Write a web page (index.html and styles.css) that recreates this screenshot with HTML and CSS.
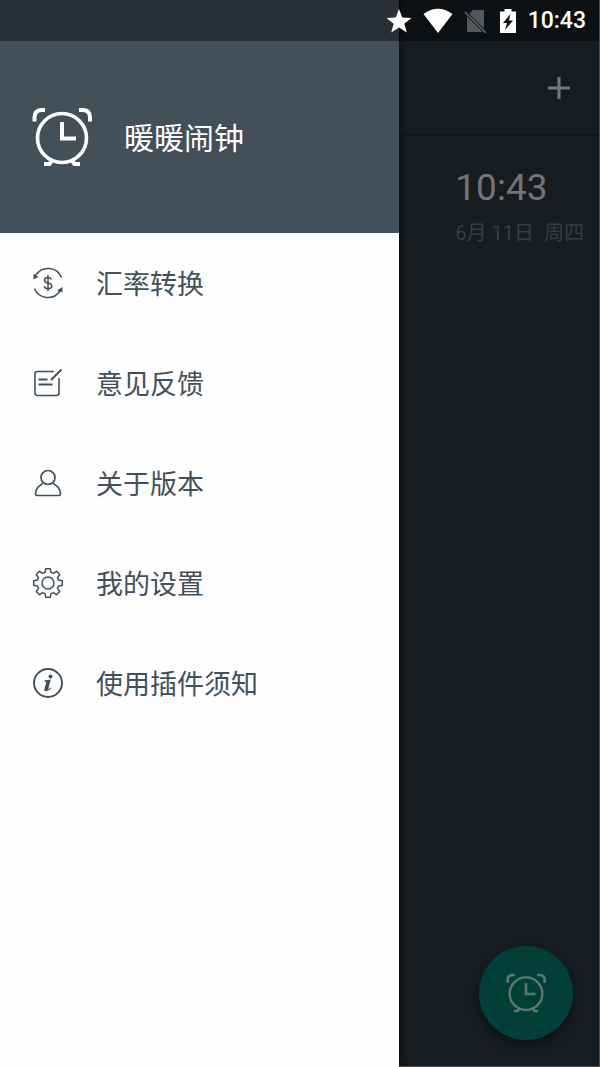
FILE: index.html
```html
<!DOCTYPE html>
<html lang="zh-CN">
<head>
<meta charset="utf-8">
<meta name="viewport" content="width=device-width, initial-scale=1">
<title>暖暖闹钟</title>
<link rel="stylesheet" href="styles.css">
</head>
<body>
<svg class="sprite" aria-hidden="true">
  <symbol id="alarm" viewBox="0 0 60 60">
    <g fill="none" stroke="currentColor">
      <circle cx="30" cy="31" r="24.5" stroke-width="3.6"/>
      <path stroke-width="4" d="M30 15v16.500h14"/>
      <path stroke-width="4" d="M2.500 14.500V10.500Q2.500 3 10 3H13M47 3h3.500Q58 3 58 10.500V14.500"/>
      <path stroke-width="4" d="M21 52 17.500 57H12M39 52 42.500 57H48"/>
    </g>
  </symbol>
</svg>
<div class="screen">
  <header class="status">
    <svg class="status-icon" viewBox="0 0 26 26"><path fill="#fff" d="m13 1 3.300 8.500 9.200.5-7.200 5.700 2.500 8.800L13 19.500l-7.800 5 2.500-8.800L.5 10l9.200-.5z"/></svg>
    <svg class="status-icon wifi" viewBox="0 0 30 26"><path fill="#fff" d="M.5 6Q15-4.500 29.500 6L15 25z"/></svg>
    <svg class="status-icon sim" viewBox="0 0 24 26"><path fill="#55585a" d="M8.500 2H20v18.500L5.500 6zM3 8.500 18.500 24H3z"/><path stroke="#55585a" stroke-width="2" d="m1 4 21 21"/></svg>
    <svg class="status-icon battery" viewBox="0 0 18 26"><path fill="#fff" d="M5.500 1h7v2.500H17V25H1V3.500h4.500z"/><path fill="#0e1113" d="M11.500 6 4 15h4l-2 7 8-9.500h-4z"/></svg>
    <time class="status-time">10:43</time>
  </header>

  <aside class="drawer">
    <div class="brand">
      <svg class="brand-icon" aria-hidden="true"><use href="#alarm"/></svg>
      <h1 class="brand-name">暖暖闹钟</h1>
    </div>
    <nav class="menu">
      <a class="item" href="#rates">
        <svg class="item-icon" viewBox="-16 -16 32 32"><g fill="none" stroke="currentColor" stroke-width="1.500"><path d="M-12-8A14.500 14.500 0 0 1 13.500-5.500M12 8A14.500 14.500 0 0 1-13.500 5.500"/><path d="M3.500-3.500Q2.500-5.500 0-5.500-3.500-5.500-3.500-3-3.500-.7 0 0 3.800.7 3.800 3.300 3.800 5.700 0 5.700-3 5.700-3.800 3.300M0-8V8"/></g><path fill="currentColor" d="M-14.500-9.500-9.500-6-14.500-3.500zM14.500 4V9.500L9 7.500z"/></svg>
        <span class="item-label">汇率转换</span>
      </a>
      <a class="item" href="#feedback">
        <svg class="item-icon" viewBox="0 0 32 32"><g fill="none" stroke="currentColor" stroke-width="1.600"><path d="M22 4.500H5.500Q3 4.500 3 7v19q0 2.500 2.500 2.500h19q2.500 0 2.500-2.500V11"/><path stroke-width="2" d="M6.500 12.500h9M6.500 17.500h14M19 13 29.500 2.500"/></g></svg>
        <span class="item-label">意见反馈</span>
      </a>
      <a class="item" href="#about">
        <svg class="item-icon" viewBox="0 0 32 32"><g fill="none" stroke="currentColor" stroke-width="1.700"><circle cx="16" cy="10.500" r="7"/><path d="M11 16.500Q4 19.500 3.500 27 3.500 28.500 5 28.500H27Q28.500 28.500 28.500 27 28 19.500 21 16.500"/></g></svg>
        <span class="item-label">关于版本</span>
      </a>
      <a class="item" href="#settings">
        <svg class="item-icon" viewBox="-16 -16 32 32"><g fill="none" stroke="currentColor" stroke-width="1.500" stroke-linejoin="round"><path d="M-3-10.600-2.300-14.300 2.300-14.300 3-10.600 5.400-9.600 8.500-11.700 11.700-8.500 9.600-5.400 10.600-3 14.300-2.300 14.300 2.300 10.600 3 9.600 5.400 11.700 8.500 8.500 11.700 5.400 9.600 3 10.600 2.300 14.300-2.300 14.300-3 10.600-5.400 9.600-8.500 11.700-11.700 8.500-9.600 5.400-10.600 3-14.300 2.300-14.300-2.300-10.600-3-9.600-5.400-11.700-8.500-8.500-11.700-5.400-9.600z"/><circle r="6"/></g></svg>
        <span class="item-label">我的设置</span>
      </a>
      <a class="item" href="#notice">
        <svg class="item-icon" viewBox="0 0 32 32"><circle cx="16" cy="16" r="14" fill="none" stroke="currentColor" stroke-width="1.900"/><circle cx="18.500" cy="9.500" r="2" fill="currentColor"/><path fill="currentColor" d="M12.500 13.500q3-.3 6.300-1L16.300 21.500q-.2 1 .6.600l1.800-1.600.7.600q-2.600 3.200-5.200 3.200-2.400 0-1.700-2.600L14.300 15.200l-1.800-.6z"/></svg>
        <span class="item-label">使用插件须知</span>
      </a>
    </nav>
  </aside>

  <main class="clock">
    <div class="toolbar">
      <button class="add" type="button" aria-label="添加"><svg class="add-icon" viewBox="0 0 24 24"><path stroke="currentColor" stroke-width="3" d="M12 1v22M1 12h22"/></svg></button>
    </div>
    <section class="now">
      <time class="now-time">10:43</time>
      <p class="now-date">6月 11日&nbsp; 周四</p>
    </section>
    <button class="fab" type="button" aria-label="新建闹钟"><svg class="fab-icon"><use href="#alarm"/></svg></button>
  </main>
</div>
</body>
</html>
```
FILE: styles.css
```css
* { box-sizing: border-box; }

body {
  margin: 0;
  background: #171c20;
  font-family: Roboto, "Noto Sans CJK SC", sans-serif;
}

.sprite { display: none; }

.screen {
  position: relative;
  display: grid;
  grid-template-columns: 2fr 1fr;
  min-height: 100vh;
  border-right: 1px solid #4b4f52;
}

.status {
  position: absolute;
  top: 0;
  left: 0;
  right: 0;
  z-index: 2;
  height: 41px;
  display: flex;
  align-items: center;
  justify-content: flex-end;
  padding-right: 13px;
  background: rgba(0, 0, 0, 0.4);
}

.status-icon {
  width: 26px;
  height: 26px;
  margin-right: 11px;
}

.wifi { width: 30px; }
.sim { width: 24px; }
.battery { width: 18px; }

.status-time {
  color: #fff;
  font-size: 23px;
  font-weight: 500;
  line-height: 28px;
}

.drawer {
  background: #fefefe;
  color: #43505a;
}

.brand {
  display: flex;
  align-items: center;
  gap: 32px;
  height: 233px;
  padding: 41px 32px 0;
  background: #43505a;
  color: #fff;
}

.brand-icon {
  width: 60px;
  height: 60px;
}

.brand-name {
  margin: 0;
  padding-top: 4px;
  font-size: 30px;
  font-weight: 400;
  line-height: 40px;
}

.menu {
  display: flex;
  flex-direction: column;
}

.item {
  display: flex;
  align-items: center;
  gap: 32px;
  height: 100px;
  padding: 0 32px;
  color: inherit;
  font-size: 27px;
  line-height: 36px;
  text-decoration: none;
}

.item-icon {
  flex: none;
  width: 32px;
  height: 32px;
}

.item-label { padding-top: 4px; }

.clock {
  display: flex;
  flex-direction: column;
  background: #171c20;
  border-bottom: 1px solid #4b4f52;
  box-shadow: inset 5px 0 5px -3px #0c0f11;
}

.toolbar {
  display: flex;
  align-items: center;
  justify-content: flex-end;
  height: 136px;
  padding: 41px 28px 0;
  border-bottom: 2px solid #101416;
}

.add {
  display: flex;
  padding: 0;
  border: 0;
  background: none;
  color: #76797b;
}

.add-icon {
  width: 24px;
  height: 24px;
}

.now {
  padding: 28px 0 0 56px;
  white-space: nowrap;
}

.now-time {
  display: block;
  color: #727577;
  font-size: 37px;
  line-height: 48px;
}

.now-date {
  margin: 6px 0 0;
  color: #373c40;
  font-size: 20px;
  line-height: 30px;
}

.fab {
  display: flex;
  align-items: center;
  justify-content: center;
  width: 94px;
  height: 94px;
  margin: auto 26px 26px auto;
  padding: 0;
  border: 0;
  border-radius: 50%;
  background: #013f38;
  color: #607773;
  box-shadow: 0 5px 10px rgba(0, 0, 0, 0.4);
}

.fab-icon {
  width: 40px;
  height: 40px;
}
```
